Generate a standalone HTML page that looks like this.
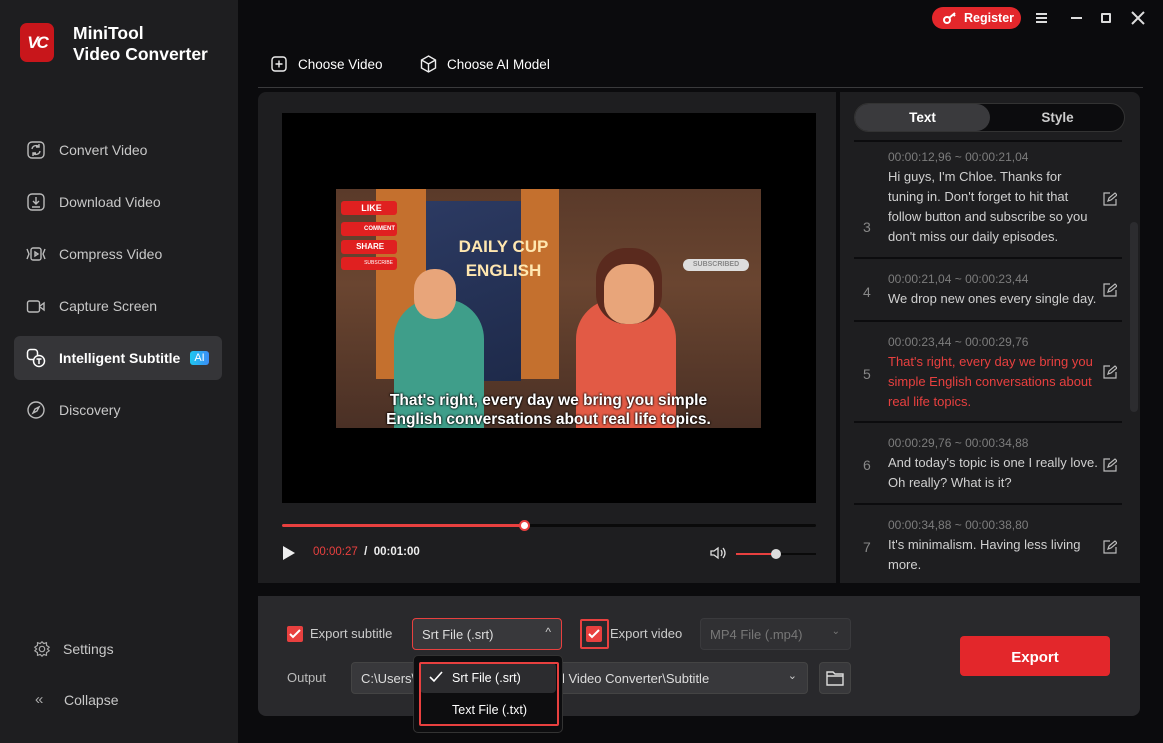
<!DOCTYPE html>
<html><head><meta charset="utf-8"><style>
*{margin:0;padding:0;box-sizing:border-box}
body{width:1163px;height:743px;background:#0b0b0d;font-family:"Liberation Sans",sans-serif;position:relative;overflow:hidden;color:#ddd}
.abs{position:absolute}
.side{left:0;top:0;width:238px;height:743px;background:#1e1e20}
.nav{position:absolute;left:26px;font-size:14px;color:#c8c8c8;display:flex;align-items:center;gap:13px}
.nav svg{width:20px;height:20px}
.sub{position:absolute;left:888px;font-size:13px;color:#d0d0d0;line-height:20px;width:212px}
.sub .t{color:#7c7c7c;font-size:12px}
.num{position:absolute;left:863px;color:#888;font-size:14px}
.ed{position:absolute;left:1103px;width:14px;height:14px}
.sep{position:absolute;left:854px;width:268px;height:2px;background:#0c0c0e}
.cb{position:absolute;width:16px;height:16px;background:#e8403f;border-radius:2px}
</style></head><body>
<div class="abs side"></div>
<div class="abs" style="left:20px;top:23px;width:34px;height:39px;background:#c8161b;border-radius:7px;color:#fff;font-weight:bold;font-size:17px;font-style:italic;display:flex;align-items:center;justify-content:center;letter-spacing:-2px">VC</div>
<div class="abs" style="left:73px;top:23px;font-size:17.5px;font-weight:bold;color:#fff;line-height:21px">MiniTool<br>Video Converter</div>

<div class="nav" style="top:140px"><svg viewBox="0 0 20 20" fill="none" stroke="#bbb" stroke-width="1.4"><rect x="2" y="2" width="16" height="16" rx="4"/><path d="M6 9a4 4 0 0 1 7-2M14 11a4 4 0 0 1-7 2M13 4v3h-3M7 16v-3h3"/></svg>Convert Video</div>
<div class="nav" style="top:192px"><svg viewBox="0 0 20 20" fill="none" stroke="#bbb" stroke-width="1.4"><rect x="2" y="2" width="16" height="16" rx="4"/><path d="M10 5v7M7 9l3 3 3-3M6 15h8"/></svg>Download Video</div>
<div class="nav" style="top:244px"><svg viewBox="0 0 20 20" fill="none" stroke="#bbb" stroke-width="1.4"><path d="M1 5l2 5-2 5M19 5l-2 5 2 5"/><rect x="5" y="4" width="10" height="12" rx="2"/><path d="M9 8l3 2-3 2z"/></svg>Compress Video</div>
<div class="nav" style="top:296px"><svg viewBox="0 0 20 20" fill="none" stroke="#bbb" stroke-width="1.4"><rect x="1.5" y="5" width="12" height="11" rx="2"/><path d="M14 10l4-3v7l-4-3"/></svg>Capture Screen</div>
<div class="abs" style="left:14px;top:336px;width:208px;height:44px;background:#353538;border-radius:6px"></div>
<div class="nav" style="top:348px;color:#fff;font-weight:bold"><svg viewBox="0 0 20 20" fill="none" stroke="#fff" stroke-width="1.5"><rect x="1.5" y="1.5" width="10" height="10" rx="3"/><circle cx="13" cy="13" r="5.5" fill="#353538"/><path d="M10.5 11h5M13 11v5"/></svg>Intelligent Subtitle <span style="background:linear-gradient(90deg,#1ec8f0,#3b8cf5);color:#fff;font-size:11px;font-weight:normal;padding:1px 4px;border-radius:3px;margin-left:-3px">AI</span></div>
<div class="nav" style="top:400px"><svg viewBox="0 0 20 20" fill="none" stroke="#bbb" stroke-width="1.4"><circle cx="10" cy="10" r="8"/><path d="M13 7l-2 4-4 2 2-4z"/></svg>Discovery</div>
<div class="nav" style="top:639px;left:33px;gap:12px"><svg viewBox="0 0 20 20" fill="none" stroke="#aaa" stroke-width="1.3" style="width:18px"><circle cx="10" cy="10" r="3"/><path d="M10 2l2 2 3-1 0 3 3 2-2 2 2 2-3 2 0 3-3-1-2 2-2-2-3 1 0-3-3-2 2-2-2-2 3-2 0-3 3 1z"/></svg>Settings</div>
<div class="nav" style="top:691px;left:35px;gap:14px"><span style="font-size:15px;color:#aaa;width:15px">«</span>Collapse</div>

<div class="abs" style="left:932px;top:7px;width:89px;height:22px;background:#e3272b;border-radius:11px;color:#fff;font-size:12.5px;font-weight:bold;line-height:22px;padding-left:32px">Register</div>
<svg class="abs" style="left:942px;top:11px" width="16" height="14" viewBox="0 0 16 14" fill="none" stroke="#fff" stroke-width="2"><circle cx="5" cy="9" r="3"/><path d="M7 7l6-5M11 3l2 2"/></svg>
<svg class="abs" style="left:1036px;top:12px" width="12" height="12" fill="#ddd"><rect y="1" width="11" height="2"/><rect y="5" width="11" height="2"/><rect y="9" width="11" height="2"/></svg>
<div class="abs" style="left:1071px;top:17px;width:11px;height:2px;background:#ddd"></div>
<div class="abs" style="left:1101px;top:13px;width:10px;height:10px;border:2px solid #ddd;border-radius:1px"></div>
<svg class="abs" style="left:1131px;top:11px" width="14" height="14" stroke="#ddd" stroke-width="2"><path d="M1 1l12 12M13 1L1 13"/></svg>

<svg class="abs" style="left:271px;top:56px" width="16" height="16" fill="none" stroke="#eee" stroke-width="1.4"><rect x="1" y="1" width="14" height="14" rx="3"/><path d="M8 4.5v7M4.5 8h7"/></svg>
<div class="abs" style="left:298px;top:57px;font-size:13.5px;color:#fff">Choose Video</div>
<svg class="abs" style="left:420px;top:55px" width="17" height="18" fill="none" stroke="#eee" stroke-width="1.4"><path d="M8.5 1l7 4v8l-7 4-7-4V5zM1.5 5l7 4 7-4M8.5 9v8"/></svg>
<div class="abs" style="left:447px;top:57px;font-size:13.5px;color:#fff">Choose AI Model</div>
<div class="abs" style="left:258px;top:87px;width:885px;height:1px;background:#3a3a3c"></div>

<div class="abs" style="left:258px;top:92px;width:578px;height:491px;background:#1e1e20;border-radius:8px 0 0 0"></div>
<div class="abs" style="left:282px;top:113px;width:534px;height:390px;background:#000"></div>
<div class="abs" style="left:336px;top:189px;width:425px;height:239px;background:linear-gradient(180deg,#5a3a2a 0%,#6a4530 40%,#4a3025 100%);overflow:hidden">
  <div class="abs" style="left:40px;top:0;width:50px;height:190px;background:#c4702e"></div>
  <div class="abs" style="left:185px;top:0;width:38px;height:190px;background:#c4702e"></div>
  <div class="abs" style="left:90px;top:12px;width:95px;height:180px;background:linear-gradient(160deg,#2c3a62,#1e2a4a)"></div>
  <div class="abs" style="left:58px;top:110px;width:90px;height:130px;background:#3f9e8a;border-radius:40px 40px 0 0"></div>
  <div class="abs" style="left:78px;top:80px;width:42px;height:50px;background:#e8a57a;border-radius:20px"></div>
  <div class="abs" style="left:240px;top:110px;width:100px;height:130px;background:#e25a45;border-radius:40px 40px 0 0"></div>
  <div class="abs" style="left:268px;top:75px;width:50px;height:60px;background:#e8a57a;border-radius:22px;box-shadow:0 -8px 0 8px #5a2a1e"></div>
  <div class="abs" style="left:100px;top:46px;width:135px;text-align:center;color:#ffe7b0;font-weight:bold;font-size:17px;line-height:24px">DAILY CUP<br>ENGLISH</div>
  <div class="abs" style="left:5px;top:12px;width:56px;height:14px;background:#e02020;border-radius:3px;color:#fff;font-size:9px;font-weight:bold;text-align:center;line-height:14px">&nbsp;&nbsp;LIKE</div>
  <div class="abs" style="left:5px;top:33px;width:56px;height:14px;background:#e02020;border-radius:3px;color:#fff;font-size:6px;font-weight:bold;text-align:right;padding-right:2px;line-height:14px">COMMENT</div>
  <div class="abs" style="left:5px;top:51px;width:56px;height:14px;background:#e02020;border-radius:3px;color:#fff;font-size:8px;font-weight:bold;text-align:center;line-height:14px">&nbsp;SHARE</div>
  <div class="abs" style="left:5px;top:68px;width:56px;height:13px;background:#e02020;border-radius:3px;color:#fff;font-size:5px;text-align:right;padding-right:4px;line-height:13px">SUBSCRIBE</div>
  <div class="abs" style="left:347px;top:70px;width:66px;height:12px;background:#ddd;border-radius:6px;color:#888;font-size:7px;font-weight:bold;text-align:center;line-height:12px">SUBSCRIBED</div>
  <div class="abs" style="left:0;top:202px;width:425px;text-align:center;color:#fff;font-weight:bold;font-size:15.5px;line-height:19px;text-shadow:0 0 2px #000,0 0 2px #000">That's right, every day we bring you simple<br>English conversations about real life topics.</div>
</div>
<div class="abs" style="left:282px;top:524px;width:534px;height:3px;background:#0a0a0a;border-radius:2px"></div>
<div class="abs" style="left:282px;top:524px;width:243px;height:3px;background:#e8403f;border-radius:2px"></div>
<div class="abs" style="left:519px;top:520px;width:11px;height:11px;background:#fff;border:2px solid #e8403f;border-radius:50%"></div>
<svg class="abs" style="left:283px;top:546px" width="12" height="14"><path d="M0 0l12 7-12 7z" fill="#eee"/></svg>
<div class="abs" style="left:313px;top:546px;font-size:11.5px;color:#e8403f">00:00:27 <span style="color:#eee;font-weight:bold">&nbsp;/&nbsp; 00:01:00</span></div>
<svg class="abs" style="left:710px;top:546px" width="16" height="14" fill="none" stroke="#ddd" stroke-width="1.3"><path d="M1 5h3l4-3v10l-4-3H1zM11 4q2 3 0 6M13 2q4 5 0 10"/></svg>
<div class="abs" style="left:736px;top:553px;width:80px;height:2px;background:#0a0a0a"></div>
<div class="abs" style="left:736px;top:553px;width:40px;height:2px;background:#e8403f"></div>
<div class="abs" style="left:771px;top:549px;width:10px;height:10px;background:#ddd;border-radius:50%"></div>

<div class="abs" style="left:840px;top:92px;width:300px;height:491px;background:#1e1e20;border-radius:0 8px 0 0"></div>
<div class="abs" style="left:854px;top:103px;width:271px;height:29px;background:#0c0c0e;border-radius:15px;border:1px solid #333"></div>
<div class="abs" style="left:855px;top:104px;width:135px;height:27px;background:#3a3a3d;border-radius:14px;color:#fff;font-weight:bold;font-size:13.5px;text-align:center;line-height:27px">Text</div>
<div class="abs" style="left:990px;top:104px;width:135px;height:27px;color:#ccc;font-weight:bold;font-size:13.5px;text-align:center;line-height:27px">Style</div>
<div class="sep" style="top:140px"></div>
<div class="abs" style="left:1130px;top:222px;width:8px;height:190px;background:#2c2c2f;border-radius:4px"></div>

<div class="sub" style="top:147px"><div class="t">00:00:12,96 ~ 00:00:21,04</div>Hi guys, I'm Chloe. Thanks for tuning in. Don't forget to hit that follow button and subscribe so you don't miss our daily episodes.</div>
<div class="num" style="top:219px">3</div>
<div class="sep" style="top:257px"></div>
<div class="sub" style="top:269px"><div class="t">00:00:21,04 ~ 00:00:23,44</div>We drop new ones every single day.</div>
<div class="num" style="top:284px">4</div>
<div class="sep" style="top:320px"></div>
<div class="sub" style="top:332px;color:#e8403f"><div class="t">00:00:23,44 ~ 00:00:29,76</div>That's right, every day we bring you simple English conversations about real life topics.</div>
<div class="num" style="top:366px">5</div>
<div class="sep" style="top:421px"></div>
<div class="sub" style="top:433px"><div class="t">00:00:29,76 ~ 00:00:34,88</div>And today's topic is one I really love. Oh really? What is it?</div>
<div class="num" style="top:457px">6</div>
<div class="sep" style="top:503px"></div>
<div class="sub" style="top:515px"><div class="t">00:00:34,88 ~ 00:00:38,80</div>It's minimalism. Having less living more.</div>
<div class="num" style="top:539px">7</div>
<svg class="ed" style="top:192px" viewBox="0 0 14 14" fill="none" stroke="#bbb" stroke-width="1.2"><path d="M7 1H1v12h12V7M5 9l1-3 6-5 2 2-6 5z"/></svg>
<svg class="ed" style="top:283px" viewBox="0 0 14 14" fill="none" stroke="#bbb" stroke-width="1.2"><path d="M7 1H1v12h12V7M5 9l1-3 6-5 2 2-6 5z"/></svg>
<svg class="ed" style="top:365px" viewBox="0 0 14 14" fill="none" stroke="#bbb" stroke-width="1.2"><path d="M7 1H1v12h12V7M5 9l1-3 6-5 2 2-6 5z"/></svg>
<svg class="ed" style="top:458px" viewBox="0 0 14 14" fill="none" stroke="#bbb" stroke-width="1.2"><path d="M7 1H1v12h12V7M5 9l1-3 6-5 2 2-6 5z"/></svg>
<svg class="ed" style="top:540px" viewBox="0 0 14 14" fill="none" stroke="#bbb" stroke-width="1.2"><path d="M7 1H1v12h12V7M5 9l1-3 6-5 2 2-6 5z"/></svg>

<div class="abs" style="left:258px;top:596px;width:882px;height:120px;background:#29292c;border-radius:0 0 8px 8px"></div>
<div class="cb" style="left:287px;top:626px"></div>
<svg class="abs" style="left:289px;top:629px" width="12" height="10" fill="none" stroke="#fff" stroke-width="2"><path d="M1 5l3 3 7-7"/></svg>
<div class="abs" style="left:310px;top:626px;font-size:13px;color:#ccc">Export subtitle</div>
<div class="abs" style="left:412px;top:618px;width:150px;height:32px;border:1px solid #e8403f;border-radius:4px;background:#38383b;font-size:13px;color:#ddd;padding:8px 9px">Srt File (.srt)<span style="position:absolute;right:10px;top:6px;font-size:12px;color:#ccc">^</span></div>
<div class="abs" style="left:580px;top:619px;width:29px;height:30px;border:2px solid #e8403f;border-radius:2px"></div>
<div class="cb" style="left:586px;top:626px"></div>
<svg class="abs" style="left:588px;top:629px" width="12" height="10" fill="none" stroke="#fff" stroke-width="2"><path d="M1 5l3 3 7-7"/></svg>
<div class="abs" style="left:610px;top:626px;font-size:13px;color:#ccc">Export video</div>
<div class="abs" style="left:700px;top:618px;width:151px;height:32px;border:1px solid #3a3a3d;border-radius:4px;background:#303033;font-size:13px;color:#777;padding:8px 9px">MP4 File (.mp4)<span style="position:absolute;right:10px;top:7px;font-size:10px">⌄</span></div>
<div class="abs" style="left:287px;top:670px;font-size:13px;color:#bbb">Output</div>
<div class="abs" style="left:351px;top:662px;width:457px;height:32px;border:1px solid #444;border-radius:4px;background:#38383b;font-size:13px;color:#ddd;padding:8px 9px">C:\Users\<span style="position:absolute;left:210px">l Video Converter\Subtitle</span><span style="position:absolute;right:10px;top:6px;font-size:11px;color:#ccc">⌄</span></div>
<div class="abs" style="left:819px;top:662px;width:32px;height:32px;border:1px solid #444;border-radius:4px;background:#38383b"></div>
<svg class="abs" style="left:826px;top:670px" width="18" height="16" fill="none" stroke="#ddd" stroke-width="1.4"><path d="M1 2h6l2 2h8v11H1zM1 6h16"/></svg>
<div class="abs" style="left:960px;top:636px;width:150px;height:40px;background:#e3272b;border-radius:4px;color:#fff;font-size:15px;font-weight:bold;text-align:center;line-height:44px">Export</div>
<div class="abs" style="left:413px;top:655px;width:150px;height:78px;background:#0d0d0f;border:1px solid #333;border-radius:5px"></div>
<div class="abs" style="left:420px;top:663px;width:136px;height:30px;background:#2c2c2f;border-radius:4px"></div>
<div class="abs" style="left:419px;top:662px;width:140px;height:64px;border:2px solid #e8403f;border-radius:2px"></div>
<svg class="abs" style="left:429px;top:671px" width="14" height="12" fill="none" stroke="#fff" stroke-width="1.6"><path d="M1 6l4 4 8-9"/></svg>
<div class="abs" style="left:452px;top:671px;font-size:12.5px;color:#fff">Srt File (.srt)</div>
<div class="abs" style="left:452px;top:703px;font-size:12.5px;color:#fff">Text File (.txt)</div>
</body></html>
